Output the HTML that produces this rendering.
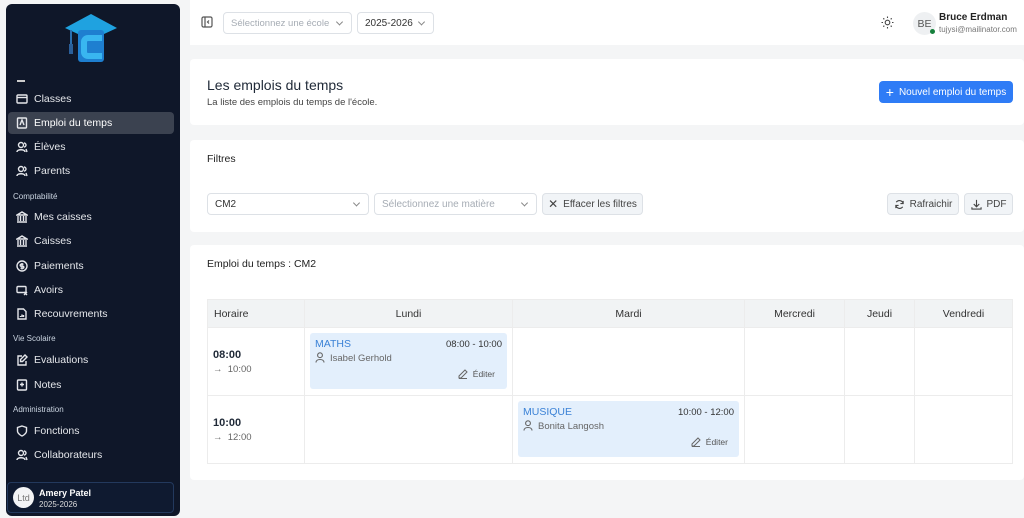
<!DOCTYPE html>
<html><head><meta charset="utf-8"><style>
*{box-sizing:border-box;margin:0;padding:0}
body{width:1024px;height:518px;overflow:hidden;background:#f4f5f6;font-family:"Liberation Sans",sans-serif;position:relative;color:#1f2937}
.a{position:absolute}
.sb{left:6px;top:4px;width:174px;height:512px;background:#0f1729;border-radius:6px}
.ni{position:absolute;left:8px;width:166px;height:22px;color:#e5e7eb;font-size:10.5px;display:flex;align-items:center;padding-left:8px;gap:6px}
.ni svg{width:12px;height:12px;stroke:#e5e7eb;fill:none;stroke-width:1.4}
.sec{position:absolute;left:13px;font-size:8px;color:#cbd5e1}
.card{background:#fff;border-radius:4px}
.sel{position:absolute;border:1px solid #dde1e6;border-radius:4px;background:#fff;font-size:10px;display:flex;align-items:center;padding-left:7px}
.chev{position:absolute;right:9px;top:50%;width:5px;height:5px;border-right:1px solid #888;border-bottom:1px solid #888;transform:translateY(-70%) rotate(45deg)}
.btn{position:absolute;border:1px solid #dde1e6;border-radius:4px;background:#f1f4f7;font-size:10px;color:#444;display:flex;align-items:center;justify-content:center;gap:5px}
table{border-collapse:collapse;position:absolute;left:207px;top:299px;width:806px;font-size:10.5px}
td,th{border:1px solid #ececec}
th{background:#f1f3f4;height:28px;font-weight:normal;color:#333}
td{height:68px;vertical-align:top;position:relative}
.ev{position:absolute;left:5px;right:5px;top:5px;height:56px;background:#e3effc;border-radius:3px;font-size:9.5px}
.pi{display:inline-block;vertical-align:-2px;margin-right:5px}
</style></head><body>
<div class="a sb">
 <svg class="a" style="left:58px;top:8px" width="54" height="52" viewBox="0 0 54 52"><polygon points="27,2 53,16 27,28 1,16" fill="#1fa2e0"/><rect x="14" y="18" width="26" height="32" rx="3" fill="#1e7fd0"/><path d="M38 26 H24 a4 4 0 0 0 -4 4 V40 a4 4 0 0 0 4 4 H38" stroke="#39b6f0" stroke-width="6" fill="none"/><rect x="24" y="33" width="14" height="4" fill="#1e7fd0"/><line x1="7" y1="18" x2="7" y2="34" stroke="#2a6fb0" stroke-width="2"/><rect x="5" y="32" width="4" height="10" fill="#2a5f9a"/></svg>
 <div class="a" style="left:11px;top:76px;width:8px;height:1.5px;background:#ccc"></div>
</div>
<div class="ni" style="top:88px"><svg viewBox="0 0 12 12"><rect x="1" y="2" width="10" height="8" rx="1"/><line x1="1" y1="4.5" x2="11" y2="4.5"/></svg>Classes</div>
<div class="ni" style="top:112px;background:#3b4250;border-radius:4px;color:#fff"><svg viewBox="0 0 12 12"><rect x="1.5" y="1" width="9" height="10" rx="1"/><path d="M4 8 L6 3 L8 8"/></svg>Emploi du temps</div>
<div class="ni" style="top:136px"><svg viewBox="0 0 12 12"><circle cx="5" cy="4" r="2.5"/><path d="M1 11 c0-3 8-3 8 0 M8 2 a2 2 0 0 1 0 4 M10 8 l1 3"/></svg>Élèves</div>
<div class="ni" style="top:160px"><svg viewBox="0 0 12 12"><circle cx="5" cy="4" r="2.5"/><path d="M1 11 c0-3 8-3 8 0 M8 2 a2 2 0 0 1 0 4 M10 8 l1 3"/></svg>Parents</div>
<div class="sec" style="top:192px">Comptabilité</div>
<div class="ni" style="top:206px"><svg viewBox="0 0 12 12"><path d="M1 4 L6 1 L11 4 Z M2 5 V10 M4.5 5 V10 M7.5 5 V10 M10 5 V10 M1 11 H11"/></svg>Mes caisses</div>
<div class="ni" style="top:230px"><svg viewBox="0 0 12 12"><path d="M1 4 L6 1 L11 4 Z M2 5 V10 M4.5 5 V10 M7.5 5 V10 M10 5 V10 M1 11 H11"/></svg>Caisses</div>
<div class="ni" style="top:255px"><svg viewBox="0 0 12 12"><circle cx="6" cy="6" r="5"/><path d="M7.5 4.2 H5.2 a1 1 0 0 0 0 2 H6.8 a1 1 0 0 1 0 2 H4.5 M6 3 V9.5"/></svg>Paiements</div>
<div class="ni" style="top:279px"><svg viewBox="0 0 12 12"><rect x="1" y="2.5" width="9" height="6" rx="1"/><path d="M8 8 l3 3 M11 8 l-3 3"/></svg>Avoirs</div>
<div class="ni" style="top:303px"><svg viewBox="0 0 12 12"><path d="M2 1 H7.5 L10 3.5 V11 H2 Z M4.5 9 V8 M6 9 V6.5 M7.5 9 V7"/></svg>Recouvrements</div>
<div class="sec" style="top:334px">Vie Scolaire</div>
<div class="ni" style="top:349px"><svg viewBox="0 0 12 12"><path d="M6 2 H2 V11 H10 V7 M9 1 L11 3 L6.5 7.5 H4.5 V5.5 Z"/></svg>Evaluations</div>
<div class="ni" style="top:374px"><svg viewBox="0 0 12 12"><rect x="1.5" y="1" width="9" height="10" rx="1"/><path d="M6 3.5 V7.5 M4 5.5 H8"/></svg>Notes</div>
<div class="sec" style="top:405px">Administration</div>
<div class="ni" style="top:420px"><svg viewBox="0 0 12 12"><path d="M6 1 L10.5 2.5 V6 C10.5 9 6 11 6 11 C6 11 1.5 9 1.5 6 V2.5 Z"/></svg>Fonctions</div>
<div class="ni" style="top:444px"><svg viewBox="0 0 12 12"><circle cx="5" cy="4" r="2.5"/><path d="M1 11 c0-3 8-3 8 0 M8 2 a2 2 0 0 1 0 4 M10 8 l1 3"/></svg>Collaborateurs</div>
<div class="a" style="left:7px;top:482px;width:167px;height:31px;border:1px solid #23395d;border-radius:4px;background:#0f1a30"></div>
<div class="a" style="left:13px;top:487px;width:21px;height:21px;border-radius:50%;background:#f3f4f6;color:#777;font-size:9px;display:flex;align-items:center;justify-content:center">Ltd</div>
<div class="a" style="left:39px;top:488px;font-size:9px;font-weight:bold;color:#fff">Amery Patel</div>
<div class="a" style="left:39px;top:500px;font-size:8px;color:#ddd">2025-2026</div>

<div class="a" style="left:190px;top:0;width:834px;height:45px;background:#fff"></div>
<svg class="a" style="left:201px;top:16px" width="12" height="12" viewBox="0 0 12 12" fill="none" stroke="#555" stroke-width="1.2"><rect x="1" y="1" width="10" height="10" rx="1.5"/><line x1="4" y1="1" x2="4" y2="11"/><path d="M8 4.5 L6.5 6 L8 7.5"/></svg>
<div class="sel" style="left:223px;top:12px;width:129px;height:22px;color:#a6acb4;font-size:9.5px">Sélectionnez une école<span class="chev"></span></div>
<div class="sel" style="left:357px;top:12px;width:77px;height:22px;color:#333">2025-2026<span class="chev"></span></div>
<svg class="a" style="left:881px;top:16px" width="13" height="13" viewBox="0 0 13 13" fill="none" stroke="#444" stroke-width="1.1"><circle cx="6.5" cy="6.5" r="2.3"/><path d="M6.5 0.5V2M6.5 11V12.5M0.5 6.5H2M11 6.5H12.5M2.3 2.3L3.3 3.3M9.7 9.7L10.7 10.7M2.3 10.7L3.3 9.7M9.7 3.3L10.7 2.3"/></svg>
<div class="a" style="left:913px;top:12px;width:23px;height:23px;border-radius:50%;background:#eef0f2;color:#555;font-size:10.5px;display:flex;align-items:center;justify-content:center">BE</div>
<div class="a" style="left:930px;top:29px;width:5px;height:5px;border-radius:50%;background:#16803c"></div>
<div class="a" style="left:939px;top:12px;font-size:10px;font-weight:bold;color:#222">Bruce Erdman</div>
<div class="a" style="left:939px;top:25px;font-size:8px;color:#777">tujysi@mailinator.com</div>

<div class="a card" style="left:190px;top:59px;width:834px;height:66px"></div>
<div class="a" style="left:207px;top:77px;font-size:14px;color:#1f2937">Les emplois du temps</div>
<div class="a" style="left:207px;top:97px;font-size:9.5px;color:#444">La liste des emplois du temps de l'école.</div>
<div class="a" style="left:879px;top:81px;width:134px;height:22px;background:#2f7cf6;border-radius:4px;color:#fff;font-size:10px;display:flex;align-items:center;justify-content:center;gap:5px"><span style="font-size:14px;line-height:1">+</span>Nouvel emploi du temps</div>

<div class="a card" style="left:190px;top:140px;width:834px;height:92px"></div>
<div class="a" style="left:207px;top:153px;font-size:10.5px;color:#222">Filtres</div>
<div class="sel" style="left:207px;top:193px;width:162px;height:22px;color:#333">CM2<span class="chev"></span></div>
<div class="sel" style="left:374px;top:193px;width:163px;height:22px;color:#a6acb4">Sélectionnez une matière<span class="chev"></span></div>
<div class="btn" style="left:542px;top:193px;width:101px;height:22px"><span style="font-size:12px">✕</span>Effacer les filtres</div>
<div class="btn" style="left:887px;top:193px;width:72px;height:22px"><svg width="11" height="11" viewBox="0 0 12 12" fill="none" stroke="#444" stroke-width="1.2"><path d="M10 5 A4.2 4.2 0 0 0 2.5 3.5 M2 7 A4.2 4.2 0 0 0 9.5 8.5 M10 2 V5 H7 M2 10 V7 H5"/></svg>Rafraichir</div>
<div class="btn" style="left:964px;top:193px;width:49px;height:22px"><svg width="11" height="11" viewBox="0 0 12 12" fill="none" stroke="#444" stroke-width="1.2"><path d="M6 1 V8 M3 5.5 L6 8.5 L9 5.5 M1 9 V11 H11 V9"/></svg>PDF</div>

<div class="a card" style="left:190px;top:245px;width:834px;height:235px"></div>
<div class="a" style="left:207px;top:258px;font-size:10.5px;color:#222">Emploi du temps : CM2</div>
<table>
<tr><th style="width:97px;text-align:left;padding-left:6px">Horaire</th><th style="width:208px">Lundi</th><th style="width:232px">Mardi</th><th style="width:100px">Mercredi</th><th style="width:70px">Jeudi</th><th>Vendredi</th></tr>
<tr><td><div class="a" style="left:5px;top:21px;font-size:11px;font-weight:bold">08:00</div><div class="a" style="left:5px;top:36px;font-size:9.5px;color:#666">→ &nbsp;10:00</div></td>
<td><div class="ev"><div class="a" style="left:5px;top:5px;color:#3b82d6;font-size:10.5px">MATHS</div><div class="a" style="right:5px;top:6px;color:#333">08:00 - 10:00</div><div class="a" style="left:5px;top:19px;color:#666"><svg class="pi" width="10" height="11" viewBox="0 0 10 11" fill="none" stroke="#666" stroke-width="1.1"><circle cx="5" cy="3.2" r="2.4"/><path d="M1 10.5 c0-4 8-4 8 0"/></svg>Isabel Gerhold</div><div class="a" style="right:12px;top:36px;color:#555;font-size:8.5px"><svg class="pi" width="10" height="10" viewBox="0 0 10 10" fill="none" stroke="#666" stroke-width="1"><path d="M7 1 L9 3 L3 9 H1 V7 Z M1 9.5 H9"/></svg>Éditer</div></div></td>
<td></td><td></td><td></td><td></td></tr>
<tr><td><div class="a" style="left:5px;top:21px;font-size:11px;font-weight:bold">10:00</div><div class="a" style="left:5px;top:36px;font-size:9.5px;color:#666">→ &nbsp;12:00</div></td><td></td>
<td><div class="ev"><div class="a" style="left:5px;top:5px;color:#3b82d6;font-size:10.5px">MUSIQUE</div><div class="a" style="right:5px;top:6px;color:#333">10:00 - 12:00</div><div class="a" style="left:5px;top:19px;color:#666"><svg class="pi" width="10" height="11" viewBox="0 0 10 11" fill="none" stroke="#666" stroke-width="1.1"><circle cx="5" cy="3.2" r="2.4"/><path d="M1 10.5 c0-4 8-4 8 0"/></svg>Bonita Langosh</div><div class="a" style="right:11px;top:36px;color:#555;font-size:8.5px"><svg class="pi" width="10" height="10" viewBox="0 0 10 10" fill="none" stroke="#666" stroke-width="1"><path d="M7 1 L9 3 L3 9 H1 V7 Z M1 9.5 H9"/></svg>Éditer</div></div></td>
<td></td><td></td><td></td></tr>
</table>
</body></html>
